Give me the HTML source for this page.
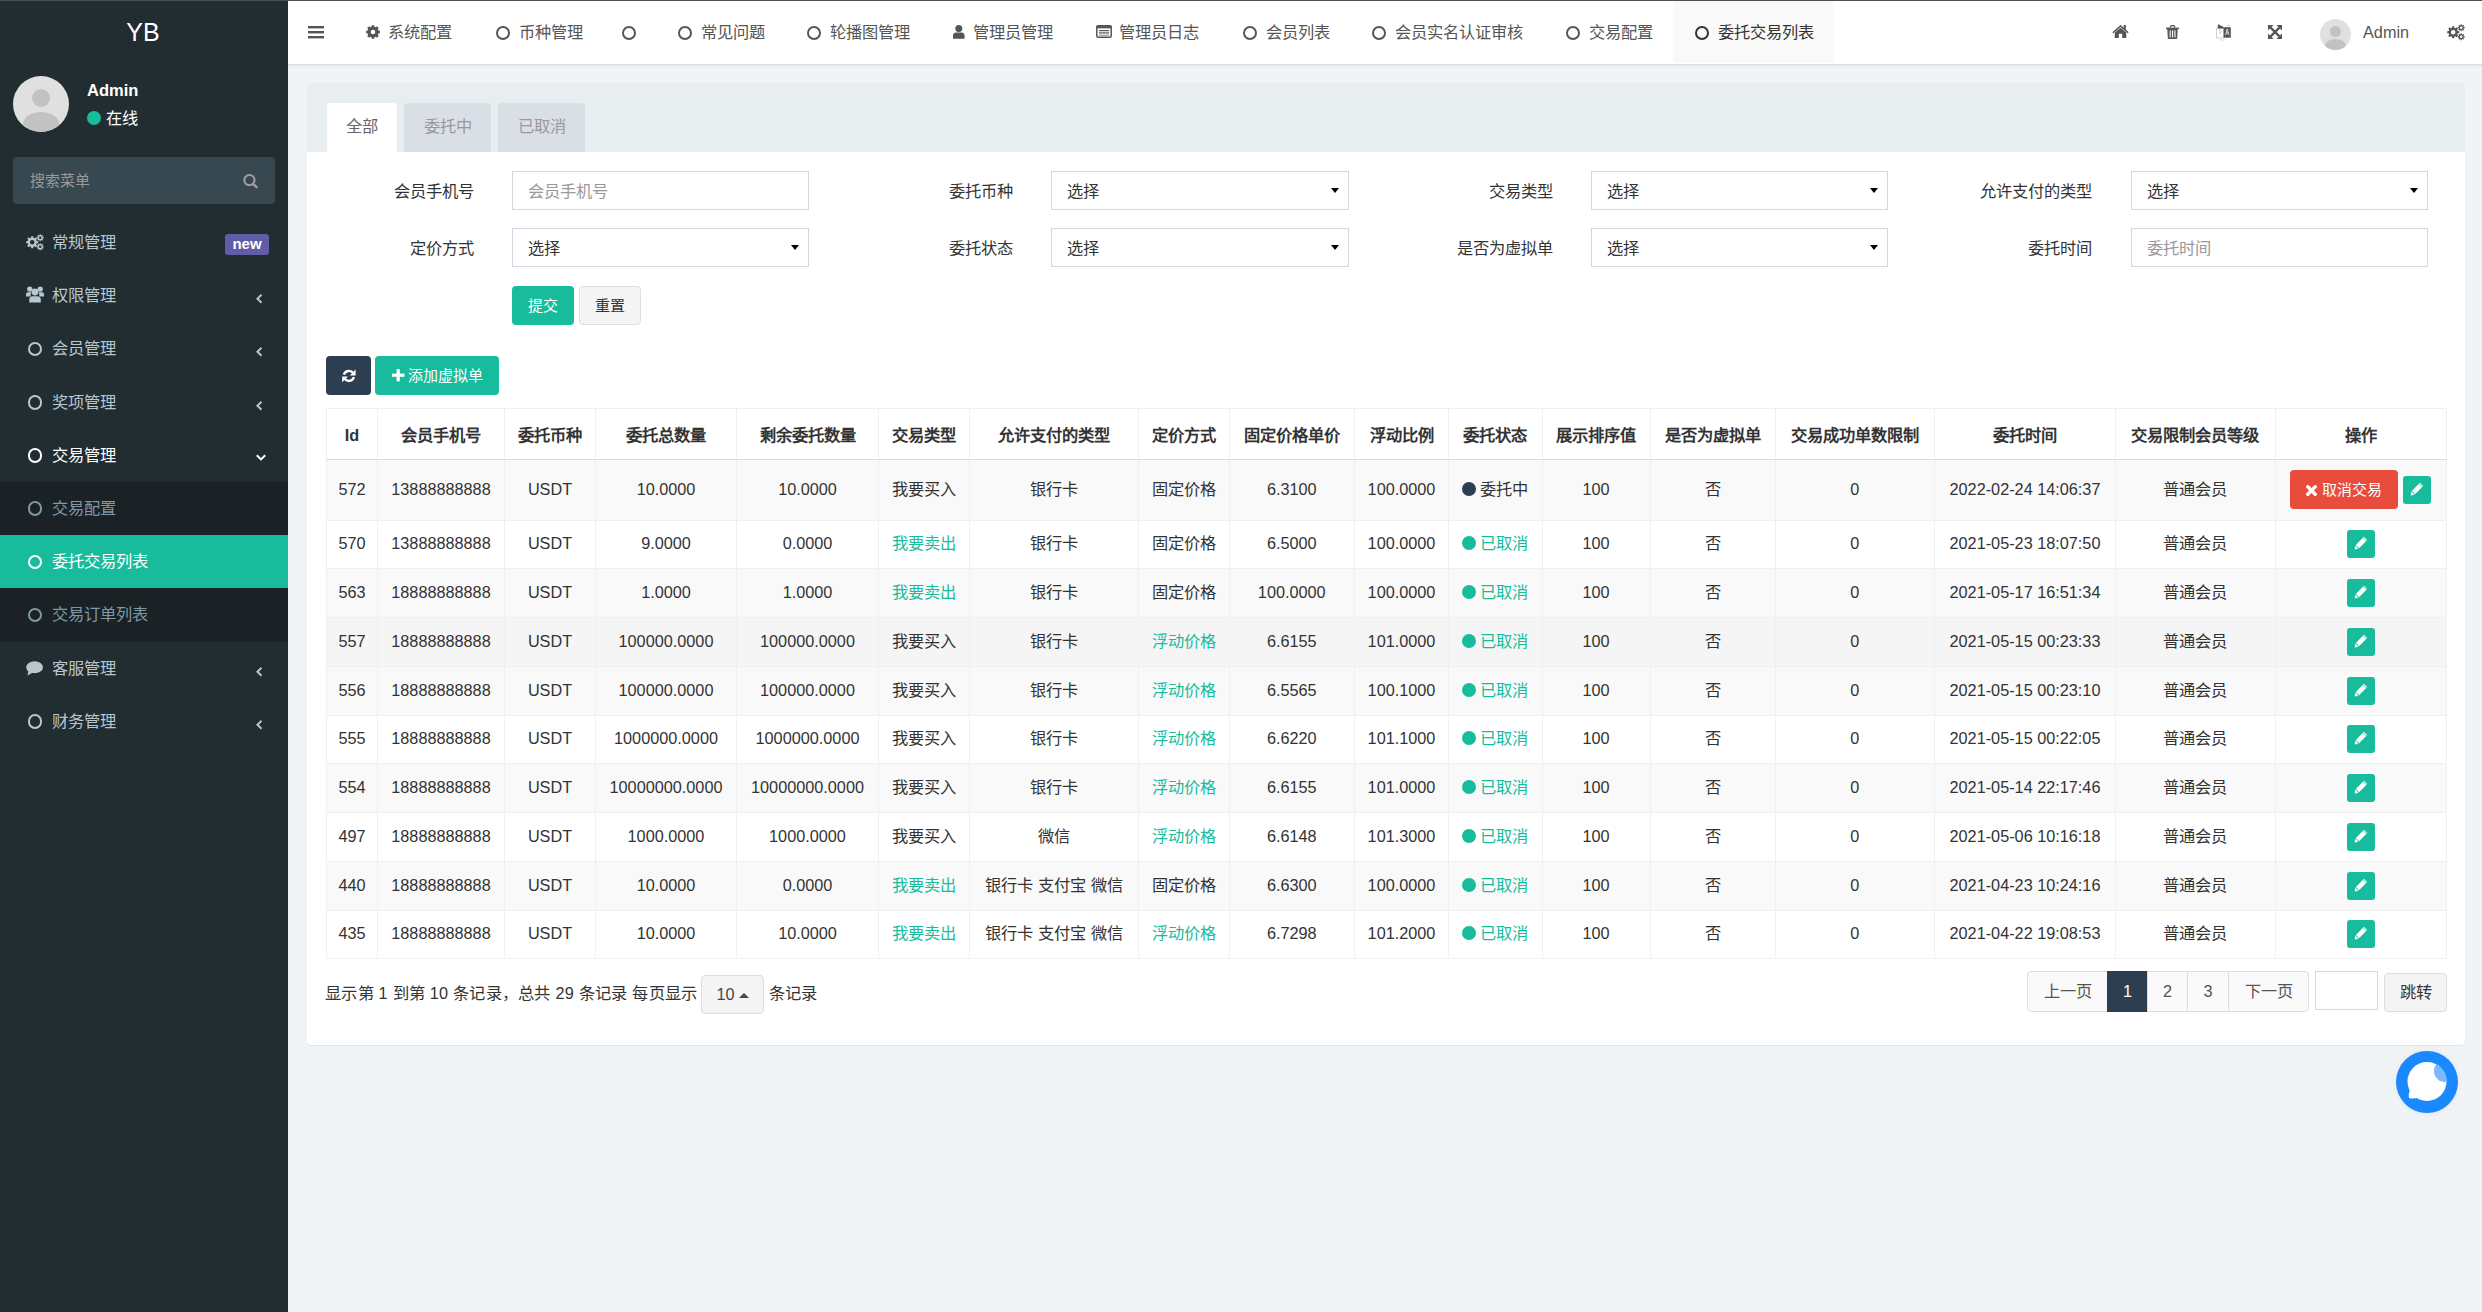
<!DOCTYPE html>
<html lang="zh-CN"><head><meta charset="utf-8"><title>委托交易列表</title>
<style>
*{box-sizing:border-box;margin:0;padding:0}
html,body{width:2482px;height:1312px;overflow:hidden}
body{font-family:"Liberation Sans",sans-serif;font-size:16.25px;color:#333;background:#f1f4f6;position:relative}
.abs{position:absolute}
svg{display:block}
#topline{position:absolute;left:0;top:0;width:2482px;height:1px;background:#4d4f54;z-index:10}
/* sidebar */
#side{position:absolute;left:0;top:0;width:288px;height:1312px;background:#222d32}
#logo{position:absolute;left:-1px;top:0;width:288px;height:64px;line-height:64px;text-align:center;color:#fff;font-size:25px}
#avatar{position:absolute;left:13px;top:76px;width:56px;height:56px;border-radius:50%;background:#e0e0e0;overflow:hidden}
#avatar .hd{position:absolute;left:19px;top:13px;width:18px;height:18px;border-radius:50%;background:#c2c2c2}
#avatar .bd{position:absolute;left:10px;top:36px;width:36px;height:24px;border-radius:50%;background:#c2c2c2}
#uname{position:absolute;left:87px;top:80px;color:#fff;font-weight:bold;font-size:16.5px;line-height:20px}
#ustat{position:absolute;left:87px;top:108px;color:#fff;font-size:16.25px;line-height:20px}
#ustat i{display:inline-block;width:14px;height:14px;border-radius:50%;background:#18bc9c;vertical-align:-1px;margin-right:5px}
#search{position:absolute;left:13px;top:157px;width:262px;height:47px;background:#374850;border-radius:4px}
#search span{position:absolute;left:17px;top:14px;color:#999;font-size:15px;line-height:20px}
#menu{position:absolute;left:0;top:216px;width:288px}
.mi{position:relative;height:53.2px;color:#b8c7ce;font-size:16.25px}
.mi .ic{position:absolute;left:26px;top:18px;width:20px;height:18px}
.mi .tx{position:absolute;left:52px;top:16px;line-height:20px}
.mi .ar{position:absolute;left:256px;top:25px}
.mi.open{color:#fff}
.mi.sub{background:#1a2226;color:#7f99a4}
.mi.act{background:#18bc9c;color:#fff}
.circ{display:block;position:absolute;left:1.5px;top:1.5px;width:14.5px;height:14.5px;border:2.8px solid currentColor;border-radius:50%}
.badge{position:absolute;left:225px;top:234px;width:44px;height:21px;background:#605ca8;color:#fff;font-weight:bold;font-size:15px;line-height:19px;text-align:center;border-radius:3px}
/* header */
#hdr{position:absolute;left:288px;top:0;width:2194px;height:65px;background:#fff;border-bottom:1px solid #d9dde0;box-shadow:0 1px 3px rgba(0,0,0,0.06)}
.nt{position:absolute;top:0;height:63px;line-height:64px;color:#555;font-size:16.25px;white-space:nowrap}
.nt .ci{display:inline-block;width:14px;height:14px;border:2.3px solid #555;border-radius:50%;vertical-align:-1.5px;margin-right:4px;margin-left:1px}
.nt.on{background:#f9f9f9;color:#333}
.nt.on .ci{border-color:#333}
/* panel */
#panel{position:absolute;left:307px;top:83px;width:2158px;height:962px;background:#fff;border-radius:4px;overflow:hidden;box-shadow:0 1px 1px rgba(0,0,0,0.07)}
#phead{position:absolute;left:0;top:0;width:2158px;height:69px;background:#e8edf0}
.tab{position:absolute;top:20px;height:49px;background:#d9dfe5;color:#999;border-radius:4px 4px 0 0;text-align:center;line-height:47px;font-size:16.25px}
.tab.on{background:#fff;color:#666}
.lbl{position:absolute;height:39px;line-height:41px;text-align:right;color:#333;font-size:16.25px;white-space:nowrap}
.inp{position:absolute;width:297px;height:39px;border:1px solid #d2d6de;background:#fff;line-height:39px;padding-left:15px;color:#333;font-size:16.25px}
.inp.ph{color:#999}
.inp .caret{position:absolute;right:9px;top:16px;width:0;height:0;border-left:4.7px solid transparent;border-right:4.7px solid transparent;border-top:5.6px solid #000}
.btn{position:absolute;height:39px;line-height:37px;border-radius:4px;text-align:center;font-size:15px;border:1px solid transparent;white-space:nowrap}
.btn.g{background:#18bc9c;color:#fff}
.btn.d{background:#f4f4f4;border-color:#ddd;color:#333}
.btn.n{background:#2c3e50;color:#fff}
/* table */
#tbl{position:absolute;left:326px;top:408px;border-collapse:collapse;table-layout:fixed;width:2120px;font-size:16.25px;color:#333}
#tbl th,#tbl td{border:1px solid #f0f0f0;text-align:center;white-space:nowrap;padding:0;overflow:hidden;line-height:20px}
#tbl th{font-weight:bold;height:51px;border-bottom:1px solid #dcdcdc;padding-top:2px}
#tbl td{height:48.75px;padding-bottom:2px}
#tbl tr.r1 td{height:60.5px}
#tbl tr.s td{background:#f9f9f9}
#tbl tr.h td{background:#f5f5f5}
.gr{color:#18bc9c}
.dot{display:inline-block;width:14px;height:14px;border-radius:50%;vertical-align:-1px;margin-right:4px;background:#18bc9c}
.dot.k{background:#2c3e50}
.eb{display:inline-block;width:28px;height:28px;background:#18bc9c;border-radius:3px;vertical-align:middle;position:relative;top:1px}
.cb{display:inline-block;width:108px;height:39px;line-height:39px;background:#e74c3c;color:#fff;border-radius:4px;vertical-align:middle;margin-right:5px;font-size:15px;position:relative;top:1px}
/* pager */
.pg{position:absolute;top:971px;height:41px;line-height:39px;border:1px solid #ddd;background:#fafafa;color:#555;text-align:center;font-size:16.25px}
.pg.on{background:#2c3e50;border-color:#2c3e50;color:#fff}
</style></head><body>
<div id="topline"></div>

<div id="panel">
  <div id="phead">
    <div class="tab on" style="left:20px;width:70px">全部</div>
    <div class="tab" style="left:97px;width:87px">委托中</div>
    <div class="tab" style="left:191px;width:87px">已取消</div>
  </div>
</div>
<div class="lbl" style="left:374px;width:100px;top:171px">会员手机号</div>
<div class="inp ph" style="left:512px;top:171px">会员手机号</div>
<div class="lbl" style="left:913px;width:100px;top:171px">委托币种</div>
<div class="inp" style="left:1051px;top:171px;width:298px">选择<i class="caret"></i></div>
<div class="lbl" style="left:1453px;width:100px;top:171px">交易类型</div>
<div class="inp" style="left:1591px;top:171px">选择<i class="caret"></i></div>
<div class="lbl" style="left:1942px;width:150px;top:171px">允许支付的类型</div>
<div class="inp" style="left:2131px;top:171px">选择<i class="caret"></i></div>
<div class="lbl" style="left:374px;width:100px;top:228px">定价方式</div>
<div class="inp" style="left:512px;top:228px">选择<i class="caret"></i></div>
<div class="lbl" style="left:913px;width:100px;top:228px">委托状态</div>
<div class="inp" style="left:1051px;top:228px;width:298px">选择<i class="caret"></i></div>
<div class="lbl" style="left:1403px;width:150px;top:228px">是否为虚拟单</div>
<div class="inp" style="left:1591px;top:228px">选择<i class="caret"></i></div>
<div class="lbl" style="left:1942px;width:150px;top:228px">委托时间</div>
<div class="inp ph" style="left:2131px;top:228px">委托时间</div>
<div class="btn g" style="left:512px;top:286px;width:62px">提交</div>
<div class="btn d" style="left:579px;top:286px;width:62px">重置</div>
<div class="btn n" style="left:326px;top:356px;width:45px"><svg class="abs" style="left:14.5px;top:11.8px;" width="14" height="14" viewBox="0 0 14 14"><path d="M11.2 4.2 A5.2 5.2 0 0 0 1.9 5.6" fill="none" stroke="#fff" stroke-width="2.4"/><path d="M13.6 0.5 L13.6 6.4 L7.8 6.4 Z" fill="#fff"/><path d="M2.6 9.6 A5.2 5.2 0 0 0 11.9 8.2" fill="none" stroke="#fff" stroke-width="2.4"/><path d="M0.2 13.3 L0.2 7.4 L6 7.4 Z" fill="#fff"/></svg></div>
<div class="btn g" style="left:375px;top:356px;width:124px"><svg class="abs" style="left:16px;top:11.8px;" width="13" height="13" viewBox="0 0 13 13"><rect x="4.6" y="0" width="3.2" height="12.4" fill="#fff"/><rect x="0" y="4.6" width="12.4" height="3.2" fill="#fff"/></svg><span style="padding-left:16px">添加虚拟单</span></div>
<table id="tbl"><colgroup><col style="width:51px"><col style="width:127px"><col style="width:91px"><col style="width:141px"><col style="width:142px"><col style="width:91px"><col style="width:169px"><col style="width:90.5px"><col style="width:125.5px"><col style="width:94px"><col style="width:93.5px"><col style="width:108px"><col style="width:125px"><col style="width:159.5px"><col style="width:181px"><col style="width:159.5px"><col style="width:171.5px"></colgroup><tr><th>Id</th><th>会员手机号</th><th>委托币种</th><th>委托总数量</th><th>剩余委托数量</th><th>交易类型</th><th>允许支付的类型</th><th>定价方式</th><th>固定价格单价</th><th>浮动比例</th><th>委托状态</th><th>展示排序值</th><th>是否为虚拟单</th><th>交易成功单数限制</th><th>委托时间</th><th>交易限制会员等级</th><th>操作</th></tr>
<tr class="r1 s"><td>572</td><td>13888888888</td><td>USDT</td><td>10.0000</td><td>10.0000</td><td>我要买入</td><td>银行卡</td><td>固定价格</td><td>6.3100</td><td>100.0000</td><td><span class="dot k"></span>委托中</td><td>100</td><td>否</td><td>0</td><td>2022-02-24 14:06:37</td><td>普通会员</td><td><span class="cb"><svg class="abs" style="left:16px;top:15px;" width="11" height="11" viewBox="0 0 11 11"><path d="M1.8 1.8 L9.2 9.2 M9.2 1.8 L1.8 9.2" stroke="#fff" stroke-width="3.4" stroke-linecap="round"/></svg><span style="padding-left:16px">取消交易</span></span><span class="eb"><svg class="abs" style="left:7px;top:6px;" width="14" height="14" viewBox="0 0 14 14"><path d="M10 0.8 L13.2 4 L5 12.2 L1.8 9 Z" fill="#fff"/><path d="M1.3 9.6 L4.4 12.7 L0.6 13.4 Z" fill="#fff"/><path d="M9.2 1.6 L12.4 4.8" stroke="#18bc9c" stroke-width="0.8"/><path d="M2.6 10.5 L3.5 11.4" stroke="#18bc9c" stroke-width="0.9"/></svg></span></td></tr>
<tr class=""><td>570</td><td>13888888888</td><td>USDT</td><td>9.0000</td><td>0.0000</td><td><span class="gr">我要卖出</span></td><td>银行卡</td><td>固定价格</td><td>6.5000</td><td>100.0000</td><td><span class="gr"><span class="dot"></span>已取消</span></td><td>100</td><td>否</td><td>0</td><td>2021-05-23 18:07:50</td><td>普通会员</td><td><span class="eb"><svg class="abs" style="left:7px;top:6px;" width="14" height="14" viewBox="0 0 14 14"><path d="M10 0.8 L13.2 4 L5 12.2 L1.8 9 Z" fill="#fff"/><path d="M1.3 9.6 L4.4 12.7 L0.6 13.4 Z" fill="#fff"/><path d="M9.2 1.6 L12.4 4.8" stroke="#18bc9c" stroke-width="0.8"/><path d="M2.6 10.5 L3.5 11.4" stroke="#18bc9c" stroke-width="0.9"/></svg></span></td></tr>
<tr class="s"><td>563</td><td>18888888888</td><td>USDT</td><td>1.0000</td><td>1.0000</td><td><span class="gr">我要卖出</span></td><td>银行卡</td><td>固定价格</td><td>100.0000</td><td>100.0000</td><td><span class="gr"><span class="dot"></span>已取消</span></td><td>100</td><td>否</td><td>0</td><td>2021-05-17 16:51:34</td><td>普通会员</td><td><span class="eb"><svg class="abs" style="left:7px;top:6px;" width="14" height="14" viewBox="0 0 14 14"><path d="M10 0.8 L13.2 4 L5 12.2 L1.8 9 Z" fill="#fff"/><path d="M1.3 9.6 L4.4 12.7 L0.6 13.4 Z" fill="#fff"/><path d="M9.2 1.6 L12.4 4.8" stroke="#18bc9c" stroke-width="0.8"/><path d="M2.6 10.5 L3.5 11.4" stroke="#18bc9c" stroke-width="0.9"/></svg></span></td></tr>
<tr class="h"><td>557</td><td>18888888888</td><td>USDT</td><td>100000.0000</td><td>100000.0000</td><td>我要买入</td><td>银行卡</td><td><span class="gr">浮动价格</span></td><td>6.6155</td><td>101.0000</td><td><span class="gr"><span class="dot"></span>已取消</span></td><td>100</td><td>否</td><td>0</td><td>2021-05-15 00:23:33</td><td>普通会员</td><td><span class="eb"><svg class="abs" style="left:7px;top:6px;" width="14" height="14" viewBox="0 0 14 14"><path d="M10 0.8 L13.2 4 L5 12.2 L1.8 9 Z" fill="#fff"/><path d="M1.3 9.6 L4.4 12.7 L0.6 13.4 Z" fill="#fff"/><path d="M9.2 1.6 L12.4 4.8" stroke="#18bc9c" stroke-width="0.8"/><path d="M2.6 10.5 L3.5 11.4" stroke="#18bc9c" stroke-width="0.9"/></svg></span></td></tr>
<tr class="s"><td>556</td><td>18888888888</td><td>USDT</td><td>100000.0000</td><td>100000.0000</td><td>我要买入</td><td>银行卡</td><td><span class="gr">浮动价格</span></td><td>6.5565</td><td>100.1000</td><td><span class="gr"><span class="dot"></span>已取消</span></td><td>100</td><td>否</td><td>0</td><td>2021-05-15 00:23:10</td><td>普通会员</td><td><span class="eb"><svg class="abs" style="left:7px;top:6px;" width="14" height="14" viewBox="0 0 14 14"><path d="M10 0.8 L13.2 4 L5 12.2 L1.8 9 Z" fill="#fff"/><path d="M1.3 9.6 L4.4 12.7 L0.6 13.4 Z" fill="#fff"/><path d="M9.2 1.6 L12.4 4.8" stroke="#18bc9c" stroke-width="0.8"/><path d="M2.6 10.5 L3.5 11.4" stroke="#18bc9c" stroke-width="0.9"/></svg></span></td></tr>
<tr class=""><td>555</td><td>18888888888</td><td>USDT</td><td>1000000.0000</td><td>1000000.0000</td><td>我要买入</td><td>银行卡</td><td><span class="gr">浮动价格</span></td><td>6.6220</td><td>101.1000</td><td><span class="gr"><span class="dot"></span>已取消</span></td><td>100</td><td>否</td><td>0</td><td>2021-05-15 00:22:05</td><td>普通会员</td><td><span class="eb"><svg class="abs" style="left:7px;top:6px;" width="14" height="14" viewBox="0 0 14 14"><path d="M10 0.8 L13.2 4 L5 12.2 L1.8 9 Z" fill="#fff"/><path d="M1.3 9.6 L4.4 12.7 L0.6 13.4 Z" fill="#fff"/><path d="M9.2 1.6 L12.4 4.8" stroke="#18bc9c" stroke-width="0.8"/><path d="M2.6 10.5 L3.5 11.4" stroke="#18bc9c" stroke-width="0.9"/></svg></span></td></tr>
<tr class="s"><td>554</td><td>18888888888</td><td>USDT</td><td>10000000.0000</td><td>10000000.0000</td><td>我要买入</td><td>银行卡</td><td><span class="gr">浮动价格</span></td><td>6.6155</td><td>101.0000</td><td><span class="gr"><span class="dot"></span>已取消</span></td><td>100</td><td>否</td><td>0</td><td>2021-05-14 22:17:46</td><td>普通会员</td><td><span class="eb"><svg class="abs" style="left:7px;top:6px;" width="14" height="14" viewBox="0 0 14 14"><path d="M10 0.8 L13.2 4 L5 12.2 L1.8 9 Z" fill="#fff"/><path d="M1.3 9.6 L4.4 12.7 L0.6 13.4 Z" fill="#fff"/><path d="M9.2 1.6 L12.4 4.8" stroke="#18bc9c" stroke-width="0.8"/><path d="M2.6 10.5 L3.5 11.4" stroke="#18bc9c" stroke-width="0.9"/></svg></span></td></tr>
<tr class=""><td>497</td><td>18888888888</td><td>USDT</td><td>1000.0000</td><td>1000.0000</td><td>我要买入</td><td>微信</td><td><span class="gr">浮动价格</span></td><td>6.6148</td><td>101.3000</td><td><span class="gr"><span class="dot"></span>已取消</span></td><td>100</td><td>否</td><td>0</td><td>2021-05-06 10:16:18</td><td>普通会员</td><td><span class="eb"><svg class="abs" style="left:7px;top:6px;" width="14" height="14" viewBox="0 0 14 14"><path d="M10 0.8 L13.2 4 L5 12.2 L1.8 9 Z" fill="#fff"/><path d="M1.3 9.6 L4.4 12.7 L0.6 13.4 Z" fill="#fff"/><path d="M9.2 1.6 L12.4 4.8" stroke="#18bc9c" stroke-width="0.8"/><path d="M2.6 10.5 L3.5 11.4" stroke="#18bc9c" stroke-width="0.9"/></svg></span></td></tr>
<tr class="s"><td>440</td><td>18888888888</td><td>USDT</td><td>10.0000</td><td>0.0000</td><td><span class="gr">我要卖出</span></td><td>银行卡 支付宝 微信</td><td>固定价格</td><td>6.6300</td><td>100.0000</td><td><span class="gr"><span class="dot"></span>已取消</span></td><td>100</td><td>否</td><td>0</td><td>2021-04-23 10:24:16</td><td>普通会员</td><td><span class="eb"><svg class="abs" style="left:7px;top:6px;" width="14" height="14" viewBox="0 0 14 14"><path d="M10 0.8 L13.2 4 L5 12.2 L1.8 9 Z" fill="#fff"/><path d="M1.3 9.6 L4.4 12.7 L0.6 13.4 Z" fill="#fff"/><path d="M9.2 1.6 L12.4 4.8" stroke="#18bc9c" stroke-width="0.8"/><path d="M2.6 10.5 L3.5 11.4" stroke="#18bc9c" stroke-width="0.9"/></svg></span></td></tr>
<tr class=""><td>435</td><td>18888888888</td><td>USDT</td><td>10.0000</td><td>10.0000</td><td><span class="gr">我要卖出</span></td><td>银行卡 支付宝 微信</td><td><span class="gr">浮动价格</span></td><td>6.7298</td><td>101.2000</td><td><span class="gr"><span class="dot"></span>已取消</span></td><td>100</td><td>否</td><td>0</td><td>2021-04-22 19:08:53</td><td>普通会员</td><td><span class="eb"><svg class="abs" style="left:7px;top:6px;" width="14" height="14" viewBox="0 0 14 14"><path d="M10 0.8 L13.2 4 L5 12.2 L1.8 9 Z" fill="#fff"/><path d="M1.3 9.6 L4.4 12.7 L0.6 13.4 Z" fill="#fff"/><path d="M9.2 1.6 L12.4 4.8" stroke="#18bc9c" stroke-width="0.8"/><path d="M2.6 10.5 L3.5 11.4" stroke="#18bc9c" stroke-width="0.9"/></svg></span></td></tr>
</table>
<div class="abs" style="left:325px;top:982px;line-height:22px;white-space:nowrap;letter-spacing:0.25px">显示第 1 到第 10 条记录，总共 29 条记录 每页显示</div>
<div class="btn d" style="left:701px;top:975px;width:63px;height:39px;font-size:16.25px;color:#444">10<i class="abs" style="left:37px;top:17px;width:0;height:0;border-left:5px solid transparent;border-right:5px solid transparent;border-bottom:5.5px solid #444"></i><span style="display:inline-block;width:14px"></span></div>
<div class="abs" style="left:769px;top:982px;line-height:22px">条记录</div>
<div class="pg" style="left:2027px;width:81px;border-radius:4px 0 0 4px">上一页</div>
<div class="pg on" style="left:2107px;width:41px">1</div>
<div class="pg" style="left:2147px;width:41px">2</div>
<div class="pg" style="left:2187px;width:42px">3</div>
<div class="pg" style="left:2228px;width:81px;border-radius:0 4px 4px 0">下一页</div>
<div class="abs" style="left:2315px;top:971px;width:63px;height:39px;border:1px solid #d2d6de;background:#fff"></div>
<div class="btn d" style="left:2384px;top:973px;width:63px;height:39px;font-size:16.25px">跳转</div>
<div class="abs" style="left:2396px;top:1051px;width:62px;height:62px;border-radius:50%;background:#1a88ff;box-shadow:0 0 6px rgba(0,0,0,0.06)"></div>
<svg class="abs" style="left:2396px;top:1051px" width="62" height="62" viewBox="0 0 62 62"><defs><clipPath id="cw"><circle cx="31" cy="30.5" r="19.5"/></clipPath></defs>
<path d="M14.5 38 Q12 43 13 47 Q18 48.5 23 46 Z" fill="#fff"/>
<circle cx="31" cy="30.5" r="19.5" fill="#fff"/>
<circle cx="49" cy="20" r="11" fill="#7db8ff" clip-path="url(#cw)"/></svg>


<div id="hdr">
  <svg class="abs" style="left:20px;top:26px;" width="16" height="13" viewBox="0 0 16 13"><rect x="0" y="0" width="16" height="2.4" fill="#555"/><rect x="0" y="5" width="16" height="2.4" fill="#555"/><rect x="0" y="10" width="16" height="2.4" fill="#555"/></svg>
  <svg class="abs" style="left:78px;top:25px;" width="14" height="14" viewBox="0 0 14 14"><path fill="#555" fill-rule="evenodd" d="M12.32 5.59 L13.87 5.63 L13.87 8.37 L12.32 8.41 L11.76 9.76 L12.82 10.89 L10.89 12.82 L9.76 11.76 L8.41 12.32 L8.37 13.87 L5.63 13.87 L5.59 12.32 L4.24 11.76 L3.11 12.82 L1.18 10.89 L2.24 9.76 L1.68 8.41 L0.13 8.37 L0.13 5.63 L1.68 5.59 L2.24 4.24 L1.18 3.11 L3.11 1.18 L4.24 2.24 L5.59 1.68 L5.63 0.13 L8.37 0.13 L8.41 1.68 L9.76 2.24 L10.89 1.18 L12.82 3.11 L11.76 4.24 Z M9.30 7.00 A2.3 2.3 0 1 0 4.70 7.00 A2.3 2.3 0 1 0 9.30 7.00 Z"/></svg>
  <div class="nt" style="left:100px">系统配置</div>
  <div class="nt " style="left:207px;"><span class="ci"></span> 币种管理</div>
  <div class="nt " style="left:333px;"><span class="ci"></span> </div>
  <div class="nt " style="left:389px;"><span class="ci"></span> 常见问题</div>
  <div class="nt " style="left:518px;"><span class="ci"></span> 轮播图管理</div>
  <svg class="abs" style="left:665px;top:25px;" width="12" height="14" viewBox="0 0 12 14"><circle cx="5.8" cy="3.6" r="3.5" fill="#555"/><path d="M0 13.8 L0 11 Q0 7.4 3.4 7.4 L8.2 7.4 Q11.6 7.4 11.6 11 L11.6 13.8 Z" fill="#555"/></svg>
  <div class="nt" style="left:685px">管理员管理</div>
  <svg class="abs" style="left:808px;top:25px;" width="16" height="13" viewBox="0 0 16 13"><rect x="0.75" y="0.75" width="14.5" height="11.5" rx="1.5" fill="none" stroke="#555" stroke-width="1.5"/><rect x="0.75" y="0.75" width="14.5" height="2.6" fill="#555"/><rect x="3" y="5" width="10" height="1.2" fill="#555"/><rect x="3" y="7.3" width="10" height="1.2" fill="#555"/><rect x="3" y="9.6" width="10" height="1.2" fill="#999"/></svg>
  <div class="nt" style="left:831px">管理员日志</div>
  <div class="nt " style="left:954px;"><span class="ci"></span> 会员列表</div>
  <div class="nt " style="left:1083px;"><span class="ci"></span> 会员实名认证审核</div>
  <div class="nt " style="left:1277px;"><span class="ci"></span> 交易配置</div>
  <div class="nt on" style="left:1385px;width:160px;padding-left:21px"><span class="ci"></span> 委托交易列表</div>
  <svg class="abs" style="left:1824px;top:24px;" width="17" height="15" viewBox="0 0 16 14"><path d="M8 0.8 L0.3 7.6 L1.3 8.6 L8 2.8 L14.7 8.6 L15.7 7.6 L13 5.2 L13 0.8 L11 0.8 L11 3.4 Z" fill="#555"/><path d="M2.6 8 L8 3.5 L13.4 8 L13.4 13.2 L9.6 13.2 L9.6 9.2 L6.4 9.2 L6.4 13.2 L2.6 13.2 Z" fill="#555"/></svg>
  <svg class="abs" style="left:1878px;top:25px;" width="13" height="14" viewBox="0 0 13 14"><path d="M4.2 2.4 Q4.2 0.6 6 0.6 L7 0.6 Q8.8 0.6 8.8 2.4" fill="none" stroke="#555" stroke-width="1.3"/><rect x="0" y="2.6" width="13" height="1.6" fill="#555"/><path d="M1.3 4 L11.7 4 L11.2 13.2 Q11.1 14 10.3 14 L2.7 14 Q1.9 14 1.8 13.2 Z" fill="#555"/><rect x="3.6" y="5.4" width="1.1" height="7" fill="#fff"/><rect x="6" y="5.4" width="1.1" height="7" fill="#fff"/><rect x="8.4" y="5.4" width="1.1" height="7" fill="#fff"/></svg>
  <svg class="abs" style="left:1928px;top:24px;" width="16" height="17" viewBox="0 0 16 17"><rect x="0.4" y="4.2" width="7.3" height="9.8" fill="none" stroke="#c8c8c8" stroke-width="0.8"/><path d="M1.8 0.6 L2.8 0.6 L7.7 3 L7.7 4.4 L1.8 4.4 Z" fill="#555"/><rect x="7.6" y="3.2" width="7.2" height="10.5" fill="#555"/><path d="M9.6 11 L11.2 5 L12.8 11 M10.2 9 L12.2 9" stroke="#e8e8e8" stroke-width="0.9" fill="none"/><path d="M10.5 1.6 L13.8 1.2 L13.8 3.2" stroke="#ccc" stroke-width="0.7" fill="none"/><path d="M3 6.5 Q4.5 6 5 7.5 M3 8.5 L5.5 8 M3.5 10 L4.5 9" stroke="#b0b0b0" stroke-width="0.7" fill="none"/><path d="M4 15.5 Q7 17 10 15.5" stroke="#ccc" stroke-width="0.7" fill="none"/></svg>
  <svg class="abs" style="left:1980px;top:25px;" width="14" height="14" viewBox="0 0 14 14"><path d="M0 0 L5.5 0 L3.6 1.9 L7 5.3 L10.4 1.9 L8.5 0 L14 0 L14 5.5 L12.1 3.6 L8.7 7 L12.1 10.4 L14 8.5 L14 14 L8.5 14 L10.4 12.1 L7 8.7 L3.6 12.1 L5.5 14 L0 14 L0 8.5 L1.9 10.4 L5.3 7 L1.9 3.6 L0 5.5 Z" fill="#555"/></svg>
  <div class="abs" style="left:2032px;top:19px;width:31px;height:31px;border-radius:50%;background:#e0e0e0;overflow:hidden"><div class="abs" style="left:10px;top:7px;width:11px;height:11px;border-radius:50%;background:#c2c2c2"></div><div class="abs" style="left:5px;top:20px;width:21px;height:14px;border-radius:50%;background:#c2c2c2"></div></div>
  <div class="nt" style="left:2075px;color:#555">Admin</div>
  <svg class="abs" style="left:2159px;top:24px;" width="18" height="17" viewBox="0 0 18 17"><path fill="#555" fill-rule="evenodd" d="M10.67 7.11 L12.21 7.13 L12.21 9.27 L10.67 9.29 L10.13 10.59 L11.20 11.69 L9.69 13.20 L8.59 12.13 L7.29 12.67 L7.27 14.21 L5.13 14.21 L5.11 12.67 L3.81 12.13 L2.71 13.20 L1.20 11.69 L2.27 10.59 L1.73 9.29 L0.19 9.27 L0.19 7.13 L1.73 7.11 L2.27 5.81 L1.20 4.71 L2.71 3.20 L3.81 4.27 L5.11 3.73 L5.13 2.19 L7.27 2.19 L7.29 3.73 L8.59 4.27 L9.69 3.20 L11.20 4.71 L10.13 5.81 Z M8.50 8.20 A2.3 2.3 0 1 0 3.90 8.20 A2.3 2.3 0 1 0 8.50 8.20 Z"/><path fill="#555" fill-rule="evenodd" d="M16.73 3.08 L17.74 3.07 L17.74 4.33 L16.73 4.32 L16.42 5.05 L17.15 5.76 L16.26 6.65 L15.55 5.92 L14.82 6.23 L14.83 7.24 L13.57 7.24 L13.58 6.23 L12.85 5.92 L12.14 6.65 L11.25 5.76 L11.98 5.05 L11.67 4.32 L10.66 4.33 L10.66 3.07 L11.67 3.08 L11.98 2.35 L11.25 1.64 L12.14 0.75 L12.85 1.48 L13.58 1.17 L13.57 0.16 L14.83 0.16 L14.82 1.17 L15.55 1.48 L16.26 0.75 L17.15 1.64 L16.42 2.35 Z M15.45 3.70 A1.25 1.25 0 1 0 12.95 3.70 A1.25 1.25 0 1 0 15.45 3.70 Z"/><path fill="#555" fill-rule="evenodd" d="M16.73 12.18 L17.74 12.17 L17.74 13.43 L16.73 13.42 L16.42 14.15 L17.15 14.86 L16.26 15.75 L15.55 15.02 L14.82 15.33 L14.83 16.34 L13.57 16.34 L13.58 15.33 L12.85 15.02 L12.14 15.75 L11.25 14.86 L11.98 14.15 L11.67 13.42 L10.66 13.43 L10.66 12.17 L11.67 12.18 L11.98 11.45 L11.25 10.74 L12.14 9.85 L12.85 10.58 L13.58 10.27 L13.57 9.26 L14.83 9.26 L14.82 10.27 L15.55 10.58 L16.26 9.85 L17.15 10.74 L16.42 11.45 Z M15.45 12.80 A1.25 1.25 0 1 0 12.95 12.80 A1.25 1.25 0 1 0 15.45 12.80 Z"/></svg>
</div>


<div id="side">
  <div id="logo">YB</div>
  <div id="avatar"><div class="hd"></div><div class="bd"></div></div>
  <div id="uname">Admin</div>
  <div id="ustat"><i></i>在线</div>
  <div id="search"><span>搜索菜单</span>
    <svg class="abs" style="left:229px;top:16px;" width="17" height="17" viewBox="0 0 17 17"><circle cx="7.4" cy="7.1" r="5.1" fill="none" stroke="#a0a0a0" stroke-width="2.1"/><path d="M11 10.8 L14.6 14.2" stroke="#a0a0a0" stroke-width="2.4" stroke-linecap="round"/></svg>
  </div>
  <div id="menu"><div class="mi "><div class="ic"><svg class="abs" style="left:0px;top:0px;" width="18" height="17" viewBox="0 0 18 17"><path fill="#b8c7ce" fill-rule="evenodd" d="M10.67 7.11 L12.21 7.13 L12.21 9.27 L10.67 9.29 L10.13 10.59 L11.20 11.69 L9.69 13.20 L8.59 12.13 L7.29 12.67 L7.27 14.21 L5.13 14.21 L5.11 12.67 L3.81 12.13 L2.71 13.20 L1.20 11.69 L2.27 10.59 L1.73 9.29 L0.19 9.27 L0.19 7.13 L1.73 7.11 L2.27 5.81 L1.20 4.71 L2.71 3.20 L3.81 4.27 L5.11 3.73 L5.13 2.19 L7.27 2.19 L7.29 3.73 L8.59 4.27 L9.69 3.20 L11.20 4.71 L10.13 5.81 Z M8.50 8.20 A2.3 2.3 0 1 0 3.90 8.20 A2.3 2.3 0 1 0 8.50 8.20 Z"/><path fill="#b8c7ce" fill-rule="evenodd" d="M16.73 3.08 L17.74 3.07 L17.74 4.33 L16.73 4.32 L16.42 5.05 L17.15 5.76 L16.26 6.65 L15.55 5.92 L14.82 6.23 L14.83 7.24 L13.57 7.24 L13.58 6.23 L12.85 5.92 L12.14 6.65 L11.25 5.76 L11.98 5.05 L11.67 4.32 L10.66 4.33 L10.66 3.07 L11.67 3.08 L11.98 2.35 L11.25 1.64 L12.14 0.75 L12.85 1.48 L13.58 1.17 L13.57 0.16 L14.83 0.16 L14.82 1.17 L15.55 1.48 L16.26 0.75 L17.15 1.64 L16.42 2.35 Z M15.45 3.70 A1.25 1.25 0 1 0 12.95 3.70 A1.25 1.25 0 1 0 15.45 3.70 Z"/><path fill="#b8c7ce" fill-rule="evenodd" d="M16.73 12.18 L17.74 12.17 L17.74 13.43 L16.73 13.42 L16.42 14.15 L17.15 14.86 L16.26 15.75 L15.55 15.02 L14.82 15.33 L14.83 16.34 L13.57 16.34 L13.58 15.33 L12.85 15.02 L12.14 15.75 L11.25 14.86 L11.98 14.15 L11.67 13.42 L10.66 13.43 L10.66 12.17 L11.67 12.18 L11.98 11.45 L11.25 10.74 L12.14 9.85 L12.85 10.58 L13.58 10.27 L13.57 9.26 L14.83 9.26 L14.82 10.27 L15.55 10.58 L16.26 9.85 L17.15 10.74 L16.42 11.45 Z M15.45 12.80 A1.25 1.25 0 1 0 12.95 12.80 A1.25 1.25 0 1 0 15.45 12.80 Z"/></svg></div><div class="tx">常规管理</div></div>
<div class="mi "><div class="ic"><svg class="abs" style="left:0px;top:0px;top:-1px" width="18" height="17" viewBox="0 0 18 17"><circle cx="3.8" cy="3.1" r="2.7" fill="#b8c7ce"/><circle cx="14.2" cy="3.1" r="2.7" fill="#b8c7ce"/><path d="M0 8.3 Q0 6.2 2 6.2 L5.6 6.2 Q4.2 8 4.6 10.6 L0 10.6 Z" fill="#b8c7ce"/><path d="M18 8.3 Q18 6.2 16 6.2 L12.4 6.2 Q13.8 8 13.4 10.6 L18 10.6 Z" fill="#b8c7ce"/><circle cx="9" cy="6" r="3.4" fill="#b8c7ce"/><path d="M3.2 16.5 L3.2 13.8 Q3.2 10.2 6.6 10.2 L11.4 10.2 Q14.8 10.2 14.8 13.8 L14.8 16.5 Z" fill="#b8c7ce"/></svg></div><div class="tx">权限管理</div><div class="ar"><svg class="" style="left:0px;top:0px;" width="7" height="10" viewBox="0 0 7 10"><polyline points="5.5,0.8 1.4,4.8 5.5,8.8" fill="none" stroke="currentColor" stroke-width="1.9"/></svg></div></div>
<div class="mi "><div class="ic"><span class="circ"></span></div><div class="tx">会员管理</div><div class="ar"><svg class="" style="left:0px;top:0px;" width="7" height="10" viewBox="0 0 7 10"><polyline points="5.5,0.8 1.4,4.8 5.5,8.8" fill="none" stroke="currentColor" stroke-width="1.9"/></svg></div></div>
<div class="mi "><div class="ic"><span class="circ"></span></div><div class="tx">奖项管理</div><div class="ar"><svg class="" style="left:0px;top:0px;" width="7" height="10" viewBox="0 0 7 10"><polyline points="5.5,0.8 1.4,4.8 5.5,8.8" fill="none" stroke="currentColor" stroke-width="1.9"/></svg></div></div>
<div class="mi open"><div class="ic"><span class="circ"></span></div><div class="tx">交易管理</div><div class="ar" style="left:256px;top:25px"><svg class="" style="left:0px;top:0px;" width="10" height="7" viewBox="0 0 10 7"><polyline points="0.8,1.2 5,5.4 9.2,1.2" fill="none" stroke="currentColor" stroke-width="2"/></svg></div></div>
<div class="mi sub"><div class="ic"><span class="circ"></span></div><div class="tx">交易配置</div></div>
<div class="mi act"><div class="ic"><span class="circ"></span></div><div class="tx">委托交易列表</div></div>
<div class="mi sub"><div class="ic"><span class="circ"></span></div><div class="tx">交易订单列表</div></div>
<div class="mi "><div class="ic"><svg class="abs" style="left:0px;top:0px;top:1px" width="18" height="15" viewBox="0 0 18 15"><ellipse cx="8.6" cy="6.2" rx="8.4" ry="6" fill="#b8c7ce"/><path d="M2.5 9.5 L1.5 14.5 L7 11.5 Z" fill="#b8c7ce"/></svg></div><div class="tx">客服管理</div><div class="ar"><svg class="" style="left:0px;top:0px;" width="7" height="10" viewBox="0 0 7 10"><polyline points="5.5,0.8 1.4,4.8 5.5,8.8" fill="none" stroke="currentColor" stroke-width="1.9"/></svg></div></div>
<div class="mi "><div class="ic"><span class="circ"></span></div><div class="tx">财务管理</div><div class="ar"><svg class="" style="left:0px;top:0px;" width="7" height="10" viewBox="0 0 7 10"><polyline points="5.5,0.8 1.4,4.8 5.5,8.8" fill="none" stroke="currentColor" stroke-width="1.9"/></svg></div></div>
</div>
  <div class="badge">new</div>
</div>

</body></html>
